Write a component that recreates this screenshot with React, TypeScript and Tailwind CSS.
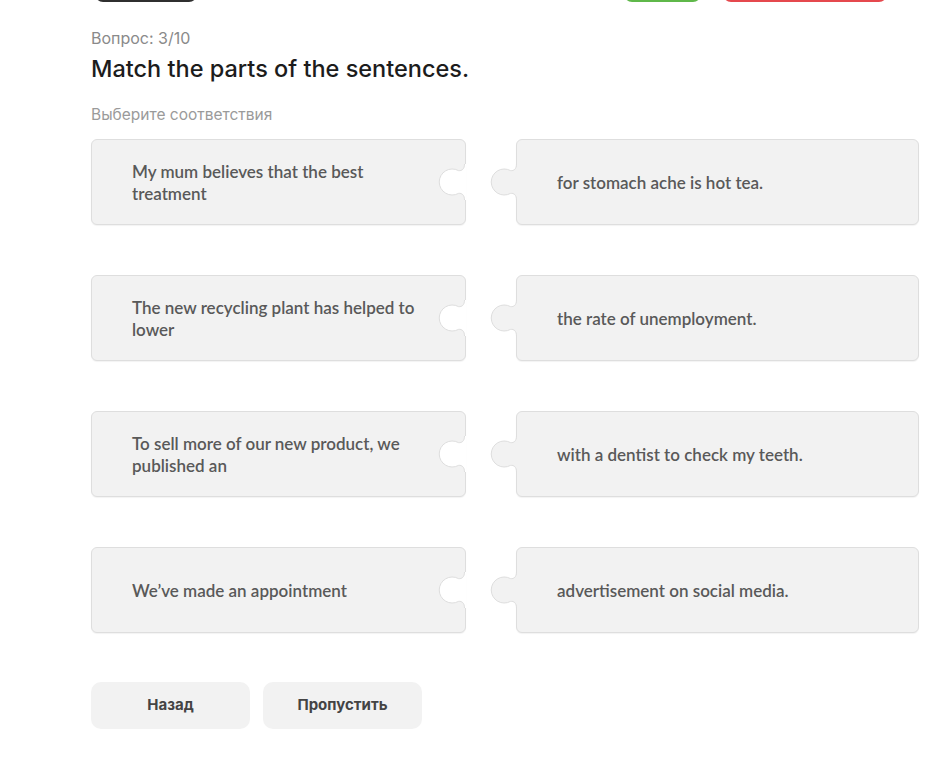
import React from 'react';

const pairs = [
  { left: 'My mum believes that the best treatment', right: 'for stomach ache is hot tea.' },
  { left: 'The new recycling plant has helped to lower', right: 'the rate of unemployment.' },
  { left: 'To sell more of our new product, we published an', right: 'with a dentist to check my teeth.' },
  { left: 'We’ve made an appointment', right: 'advertisement on social media.' },
];

// puzzle tab, bulging left; x=30.5 is the card border line
const TAB_FILL = 'M32 2 L30.5 2 C30.5 7 28 9 24.5 8.6 A13 13 0 1 0 24.5 31.4 C28 31 30.5 33 30.5 38 L32 38 Z';
const TAB_LINE = 'M30.5 2 C30.5 7 28 9 24.5 8.6 A13 13 0 1 0 24.5 31.4 C28 31 30.5 33 30.5 38';

function Tab({ fill, className }: { fill: string; className: string }) {
  return (
    <svg width="32" height="40" viewBox="0 0 32 40" className={className}>
      <path d={TAB_FILL} fill={fill} />
      <path d={TAB_LINE} fill="none" stroke="#dedede" strokeWidth="1" />
    </svg>
  );
}

function Card({ text, side }: { text: string; side: 'left' | 'right' }) {
  return (
    <div className="relative h-[86px] rounded-[6px] border border-[#dedede] bg-[#f2f2f2] shadow-[0_1px_1px_rgba(0,0,0,0.05)] flex items-center pt-[2px] pl-[40px] pr-[38px]">
      <span className="text-[17px] leading-[22px] text-[#595959] font-semibold" style={{ fontFamily: 'Lato, sans-serif' }}>
        {text}
      </span>
      {side === 'left' ? (
        <Tab fill="#ffffff" className="absolute right-[-1px] top-1/2 -translate-y-1/2" />
      ) : (
        <Tab fill="#f2f2f2" className="absolute left-[-31px] top-1/2 -translate-y-1/2" />
      )}
    </div>
  );
}

export default function App() {
  return (
    <div className="min-h-screen bg-white pl-[91px] pr-[32px]" style={{ fontFamily: 'Inter, "Noto Sans", sans-serif' }}>
      {/* cut-off header buttons */}
      <div className="flex items-end h-[2px] overflow-hidden">
        <div className="shrink-0 ml-[4px] w-[102px] h-[40px] rounded-[8px] bg-[#2f2f2f]" />
        <div className="shrink-0 ml-[427px] w-[77px] h-[40px] rounded-[8px] bg-[#5fb84a]" />
        <div className="shrink-0 ml-[22px] w-[164px] h-[40px] rounded-[8px] bg-[#e5484d]" />
      </div>

      <div className="mt-[26px] text-[16px] leading-[20px] text-[#8a8a8a]">Вопрос: 3/10</div>
      <h1 className="mt-[6px] text-[23.5px] leading-[30px] font-medium text-[#1c1c1c]">Match the parts of the sentences.</h1>
      <div className="mt-[21px] text-[15.5px] leading-[20px] text-[#9a9a9a]">Выберите соответствия</div>

      <div className="mt-[14px] grid grid-cols-[375px_1fr] gap-x-[50px] gap-y-[50px]">
        {pairs.map((p) => (
          <React.Fragment key={p.left}>
            <Card text={p.left} side="left" />
            <Card text={p.right} side="right" />
          </React.Fragment>
        ))}
      </div>

      <div className="mt-[49px] flex gap-[13px]">
        <button className="w-[159px] h-[47px] rounded-[10px] bg-[#f2f2f2] text-[15px] font-bold text-[#444444]">Назад</button>
        <button className="w-[159px] h-[47px] rounded-[10px] bg-[#f2f2f2] text-[15px] font-bold text-[#444444]">Пропустить</button>
      </div>
    </div>
  );
}
